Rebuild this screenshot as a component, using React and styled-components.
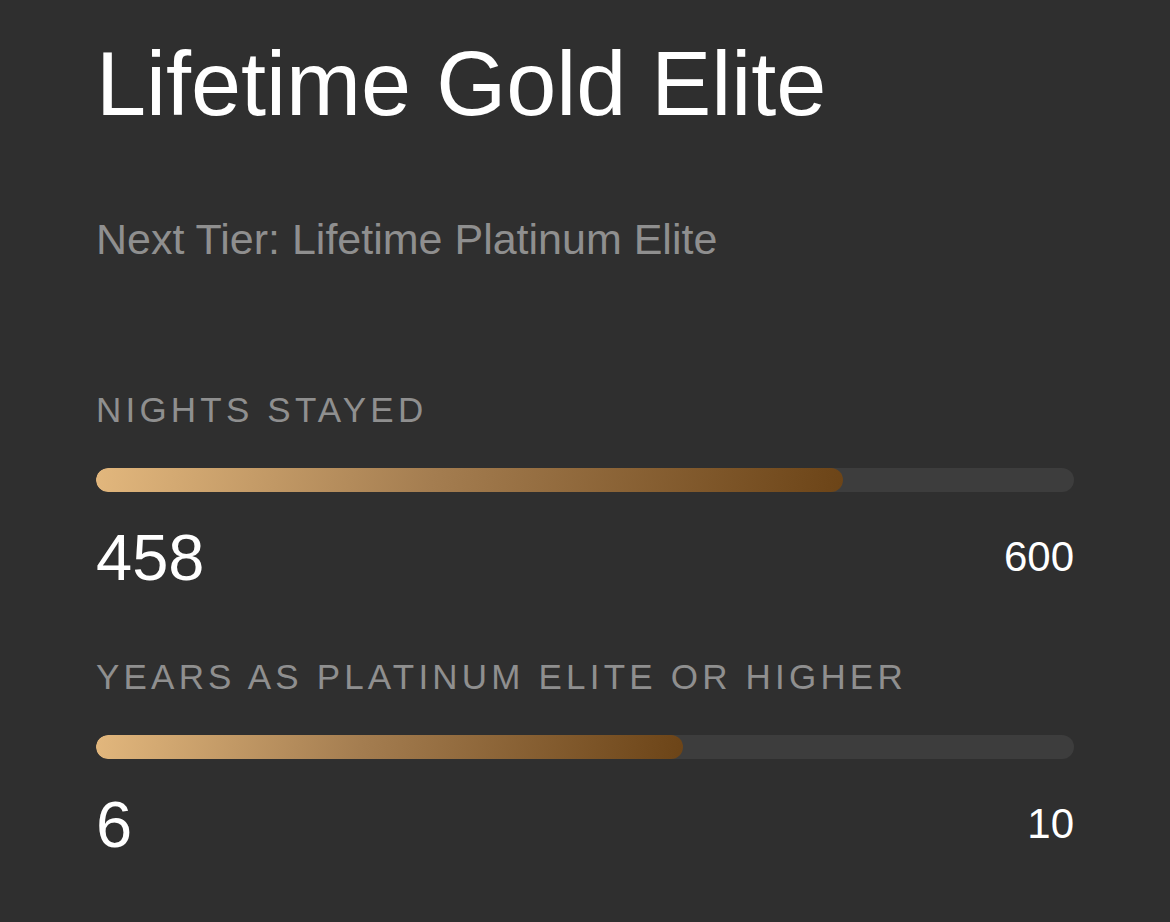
import React from 'react';
import styled, { createGlobalStyle } from 'styled-components';

const metrics = [
	{ label: 'Nights Stayed', value: 458, target: 600 },
	{ label: 'Years as Platinum Elite or Higher', value: 6, target: 10 },
];

function App() {
	return (
		<>
			<GlobalStyle />
			<Page>
				<Title>Lifetime Gold Elite</Title>
				<NextTier>Next Tier: Lifetime Platinum Elite</NextTier>
				<Metrics>
					{metrics.map((m) => (
						<Metric key={m.label}>
							<Label>{m.label}</Label>
							<Track>
								<Fill style={{ width: `${(m.value / m.target) * 100}%` }} />
							</Track>
							<Values>
								<Current>{m.value}</Current>
								<Target>{m.target}</Target>
							</Values>
						</Metric>
					))}
				</Metrics>
			</Page>
		</>
	);
}

const GlobalStyle = createGlobalStyle`
	html, body {
		margin: 0;
		padding: 0;
		background: #2f2f2f;
	}
	body {
		font-family: 'Liberation Sans', Arial, Helvetica, sans-serif;
		-webkit-font-smoothing: antialiased;
	}
`;

const Page = styled.div`
	min-height: 100vh;
	box-sizing: border-box;
	padding: 39px 96px 0;
	background: #2f2f2f;
	color: #fff;
`;

const Title = styled.h1`
	margin: 0 0 89px;
	font-size: 90px;
	font-weight: 400;
	line-height: 1;
	color: #fff;
`;

const NextTier = styled.div`
	margin-bottom: 131px;
	font-size: 43px;
	line-height: 1;
	color: #8f8f8f;
`;

const Metrics = styled.div`
	display: flex;
	flex-direction: column;
	gap: 70px;
`;

const Metric = styled.section`
	display: flex;
	flex-direction: column;
`;

const Label = styled.div`
	margin-bottom: 41px;
	font-size: 35px;
	line-height: 1;
	letter-spacing: 4.2px;
	text-transform: uppercase;
	color: #8f8f8f;
`;

const Track = styled.div`
	height: 24px;
	border-radius: 12px;
	background: #3d3d3d;
	overflow: hidden;
	margin-bottom: 33px;
`;

const Fill = styled.div`
	height: 100%;
	border-radius: 12px;
	background: linear-gradient(100deg, #e2b77d 0%, #a47d50 45%, #6c4417 100%);
`;

const Values = styled.div`
	display: flex;
	align-items: center;
	justify-content: space-between;
	height: 64px;
`;

const Current = styled.span`
	font-size: 65px;
	line-height: 1;
	color: #fff;
`;

const Target = styled.span`
	font-size: 42px;
	line-height: 1;
	color: #fff;
`;

export default App;
